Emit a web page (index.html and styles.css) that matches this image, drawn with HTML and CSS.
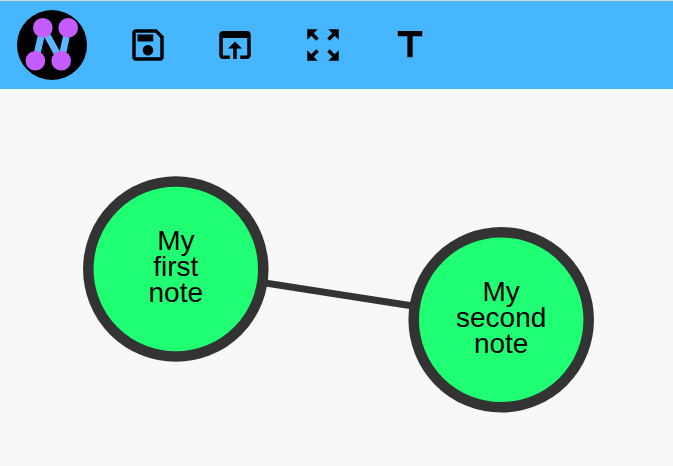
FILE: index.html
```
<!DOCTYPE html>
<html lang="en">
<head>
<meta charset="utf-8">
<title>Notes</title>
<link rel="stylesheet" href="styles.css">
</head>
<body>
<header class="toolbar">
  <svg class="logo" viewBox="0 0 70 70">
    <circle cx="35" cy="35" r="35"/>
    <path class="logo-link" d="M18.5 50.8L26 17.7L44.2 50.8L51.2 17.7"/>
    <g class="logo-node"><circle cx="25.8" cy="17.7" r="9.8"/><circle cx="51.2" cy="17.7" r="9.8"/><circle cx="18.4" cy="50.8" r="9.8"/><circle cx="44.2" cy="50.8" r="9.8"/></g>
  </svg>
  <nav class="tools">
    <svg class="icon" viewBox="0 0 24 24"><path d="M17 3H5c-1.11 0-2 .9-2 2v14c0 1.1.89 2 2 2h14c1.1 0 2-.9 2-2V7l-4-4zm2 16H5V5h11.17L19 7.83V19zm-7-7c-1.66 0-3 1.34-3 3s1.34 3 3 3 3-1.34 3-3-1.34-3-3-3zM6 6h9v4H6z"/></svg>
    <svg class="icon" viewBox="0 0 24 24"><path d="M19 4H5c-1.11 0-2 .9-2 2v12c0 1.1.89 2 2 2h4v-2H5V8h14v10h-4v2h4c1.1 0 2-.9 2-2V6c0-1.1-.89-2-2-2zm-7 6l-4 4h3v6h2v-6h3l-4-4z"/></svg>
    <svg class="icon" viewBox="0 0 24 24"><path d="M15 3l2.3 2.3-2.89 2.87 1.42 1.42L18.7 6.7 21 9V3zM3 9l2.3-2.3 2.87 2.89 1.42-1.42L6.7 5.3 9 3H3zm6 12l-2.3-2.3 2.89-2.87-1.42-1.42L5.3 17.3 3 15v6zm12-6l-2.3 2.3-2.87-2.89-1.42 1.42 2.89 2.87L15 21h6z"/></svg>
    <svg class="icon" viewBox="0 0 24 24"><path d="M5 4v3h5.5v12h3V7H19V4z"/></svg>
  </nav>
</header>
<main class="board">
  <svg class="graph" viewBox="0 89 673 377">
    <line class="edge" x1="175.8" y1="269.1" x2="501.2" y2="319.8"/>
    <circle class="node" cx="175.8" cy="269.1" r="87.5"/>
    <circle class="node" cx="501.2" cy="319.8" r="87.5"/>
    <g class="label">
      <text x="175.8" y="250">My</text>
      <text x="175.8" y="276">first</text>
      <text x="175.8" y="302">note</text>
      <text x="501.2" y="301">My</text>
      <text x="501.2" y="327">second</text>
      <text x="501.2" y="353">note</text>
    </g>
  </svg>
</main>
</body>
</html>
```

FILE: styles.css
```
body {
  margin: 0;
  height: 466px;
  overflow: hidden;
  display: flex;
  flex-direction: column;
  background: #f8f8f8;
  font-family: "Liberation Sans", Arial, sans-serif;
}
.toolbar {
  box-sizing: border-box;
  flex: none;
  height: 89px;
  padding: 0 17px;
  display: flex;
  align-items: center;
  gap: 40px;
  background: #45b6ff;
  border-top: 1px solid #d2d6d9;
}
.logo { width: 70px; height: 70px; }
.logo-link { fill: none; stroke: #5cb5ff; stroke-width: 6.8; }
.logo-node { fill: #c45cff; }
.tools { display: flex; gap: 45.4px; }
.icon { width: 42px; height: 42px; }
.board { flex: 1; }
.graph { display: block; width: 673px; height: 377px; }
.edge { stroke: #333; stroke-width: 7; }
.node { fill: #20ff74; stroke: #333; stroke-width: 10.5; }
.label { font-size: 28px; text-anchor: middle; }
```
